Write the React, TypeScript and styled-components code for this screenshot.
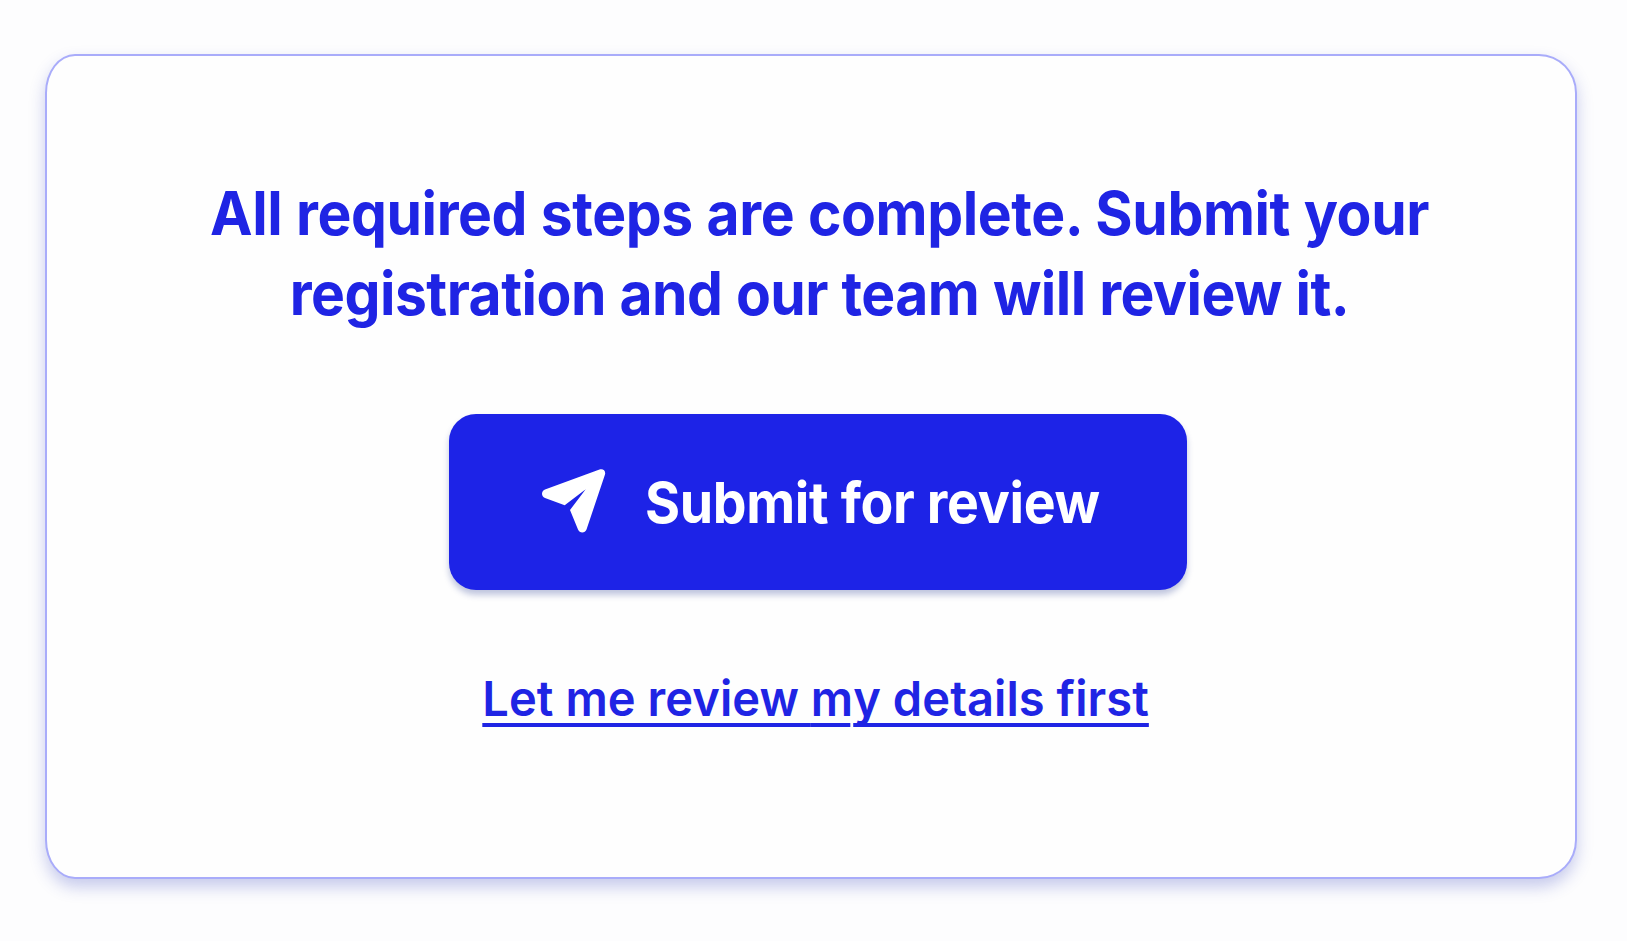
import React from "react";
import styled, { createGlobalStyle } from "styled-components";

const Global = createGlobalStyle`
  * { box-sizing: border-box; }
  body { margin: 0; background: #fdfdfe; font-family: Inter, "Liberation Sans", sans-serif; }
`;
const Page = styled.main`
  height: 941px;
  padding: 54px 50px 62px 45px;
  overflow: hidden;
`;
const Card = styled.section`
  height: 825px;
  border: 2px solid #a9acfa;
  border-radius: 30px 38px 38px 30px / 39px;
  background: #fefefe;
  box-shadow: 0 8px 16px rgba(50, 65, 190, 0.27);
  display: flex;
  flex-direction: column;
  align-items: center;
  padding: 117px 0 0 14px;
`;
const Condensed = styled.span<{ $scale: number; $spacing: string; $words?: string; $origin?: string }>`
  display: block;
  letter-spacing: ${(p) => p.$spacing};
  word-spacing: ${(p) => p.$words ?? "0"};
  transform: scaleX(${(p) => p.$scale});
  transform-origin: ${(p) => p.$origin ?? "center"};
  white-space: nowrap;
`;
const Message = styled.h1`
  margin: 0 0 0 4px;
  font-size: 60px;
  line-height: 80px;
  font-weight: 700;
  color: #1f24e4;
  text-align: center;
`;
const SubmitButton = styled.button`
  margin: 81px 0 0;
  width: 738px;
  height: 176px;
  border: 0;
  border-radius: 27px;
  background: #1d23e7;
  color: #fff;
  display: flex;
  align-items: center;
  padding: 2px 0 0 93px;
  gap: 39px;
  font: 700 57px/70px Inter, "Liberation Sans", sans-serif;
  box-shadow: 0 5px 6px rgba(30, 50, 140, 0.28);
`;
const PlaneIcon = styled.svg`
  flex: none;
  width: 64px;
  height: 64px;
  margin-bottom: 4px;
`;
const ReviewLink = styled.a`
  margin: 79px 5px 0 0;
  font-size: 48.5px;
  line-height: 60px;
  font-weight: 560;
  color: #1f24e4;
  text-decoration: none;
`;
const Underlined = styled.span<{ $gap?: string }>`
  margin-left: ${(p) => p.$gap ?? "0"};
  text-decoration: underline;
  text-decoration-thickness: 3.5px;
  text-decoration-skip-ink: none;
  text-underline-offset: 7px;
`;
const TightLetter = styled.span`
  letter-spacing: -3px;
`;

export default function App() {
  return (
    <>
      <Global />
      <Page>
        <Card>
          <Message>
            <Condensed $scale={0.95} $spacing="-0.42px" $words="0.6px">All required steps are complete. Submit your</Condensed>
            <Condensed $scale={0.95} $spacing="-0.55px" $words="0.6px">registration and our team will review it.</Condensed>
          </Message>
          <SubmitButton type="button">
            <PlaneIcon viewBox="0 0 64 64" fill="#fff" aria-hidden="true">
              <path d="M3 20.5 57.5.6C61-.7 64 2 63 5.5L44.5 60.5C43 64.5 37.5 64.5 36 60.5L28 41 43.7 20.3 22.7 36.2 3 29C-1 27.5-1 22 3 20.5Z" />
            </PlaneIcon>
            <Condensed $scale={0.94} $spacing="-0.35px" $origin="left center">Submit for review</Condensed>
          </SubmitButton>
          <ReviewLink href="#">
            <Condensed $scale={0.97} $spacing="0.05px">
              <Underlined>Let me review <TightLetter>m</TightLetter></Underlined>
              <Underlined $gap="3px">y details first</Underlined>
            </Condensed>
          </ReviewLink>
        </Card>
      </Page>
    </>
  );
}
